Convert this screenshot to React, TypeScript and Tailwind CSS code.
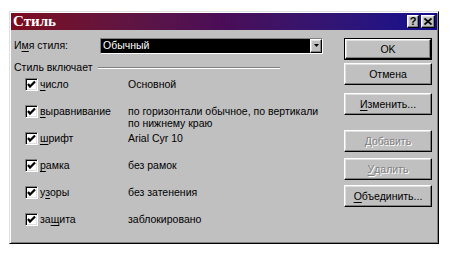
import type { ReactNode } from 'react'

const raised =
  'border border-t-white border-l-white border-r-black border-b-black shadow-[inset_-1px_-1px_#808080,inset_1px_1px_#dfdfdf]'

function Key({ children }: { children: ReactNode }) {
  return <span className="underline underline-offset-[2px] decoration-[1px]">{children}</span>
}

function Button({ children, disabled, primary }: { children: ReactNode; disabled?: boolean; primary?: boolean }) {
  const inner = (
    <div
      className={`flex h-full w-full items-center justify-center bg-[#c0c0c0] ${raised} ${
        disabled ? 'text-[#808080] [text-shadow:1px_1px_#ffffff]' : 'text-black'
      }`}
    >
      {children}
    </div>
  )
  if (primary) {
    return <div className="h-[22px] w-[88px] border border-black">{inner}</div>
  }
  return <div className="h-[22px] w-[88px]">{inner}</div>
}

function CheckBox() {
  return (
    <span className="flex h-[13px] w-[13px] shrink-0 items-center justify-center border border-t-[#808080] border-l-[#808080] border-r-white border-b-white bg-white shadow-[inset_1px_1px_#000,inset_-1px_-1px_#dfdfdf]">
      <svg viewBox="0 0 11 11" className="h-[11px] w-[11px]">
        <path d="M2 5 L4 7.5 L9 2.5" fill="none" stroke="#000" strokeWidth="2.2" />
      </svg>
    </span>
  )
}

const rows: { label: ReactNode; value: ReactNode }[] = [
  { label: <><Key>ч</Key>исло</>, value: 'Основной' },
  {
    label: <><Key>в</Key>ыравнивание</>,
    value: (
      <>
        по горизонтали обычное, по вертикали
        <br />
        по нижнему краю
      </>
    ),
  },
  { label: <><Key>ш</Key>рифт</>, value: 'Arial Cyr 10' },
  { label: <><Key>р</Key>амка</>, value: 'без рамок' },
  { label: <>у<Key>з</Key>оры</>, value: 'без затенения' },
  { label: <>за<Key>щ</Key>ита</>, value: 'заблокировано' },
]

export default function App() {
  return (
    <div className="h-[257px] w-[455px] bg-white pl-[9px] pt-[11px] font-['Liberation_Sans',Arial,sans-serif] text-[10.5px] leading-[13px] text-black">
      <div className="flex h-[233px] w-[430px] flex-col border border-t-[#dfdfdf] border-l-[#dfdfdf] border-r-black border-b-black bg-[#c0c0c0] p-px shadow-[inset_1px_1px_#fff,inset_-1px_-1px_#808080]">
        {/* заголовок */}
        <div className="flex h-[17px] items-center bg-gradient-to-r from-[#7d0a1c] via-[#4a0c58] to-[#120c90] pl-[2px] pr-[2px]">
          <span className="font-['Liberation_Serif',serif] text-[15px] font-bold leading-[17px] text-white">Стиль</span>
          <div className="ml-auto flex gap-[2px]">
            <span className={`flex h-[13px] w-[12px] items-center justify-center bg-[#c0c0c0] text-[11px] font-bold leading-none ${raised}`}>
              ?
            </span>
            <span className={`flex h-[13px] w-[14px] items-center justify-center bg-[#c0c0c0] ${raised}`}>
              <svg viewBox="0 0 8 7" className="h-[7px] w-[8px]">
                <path d="M0.5 0.5 L7.5 6.5 M7.5 0.5 L0.5 6.5" stroke="#000" strokeWidth="1.8" />
              </svg>
            </span>
          </div>
        </div>

        <div className="flex pt-[8px]">
          <div className="flex-1 pl-[3px]">
            <div className="flex h-[15px] items-center">
              <span className="w-[86px]">
                И<Key>м</Key>я стиля:
              </span>
              <div className="flex h-[16px] w-[223px] border border-t-[#808080] border-l-[#808080] border-r-white border-b-white shadow-[inset_1px_1px_#000]">
                <div className="flex flex-1 items-center bg-black pl-[2px] text-white">Обычный</div>
                <div className={`flex w-[12px] items-center justify-center bg-[#c0c0c0] ${raised}`}>
                  <svg viewBox="0 0 5 3" className="h-[3px] w-[5px]">
                    <path d="M0 0 H5 L2.5 3 Z" fill="#000" />
                  </svg>
                </div>
              </div>
            </div>

            <div className="mt-[8px] flex w-[266px] items-center">
              <span>Стиль включает</span>
              <span className="ml-[6px] h-[2px] flex-1 border-t border-b border-t-[#808080] border-b-white" />
            </div>

            <div className="mt-[4px]">
              {rows.map((r, i) => (
                <div key={i} className="flex h-[27px] items-start pl-[11px]">
                  <CheckBox />
                  <span className="ml-[2px] w-[88px]">{r.label}</span>
                  <span className="leading-[12px]">{r.value}</span>
                </div>
              ))}
            </div>
          </div>

          <div className="flex flex-col pr-[5px]">
            <Button primary>OK</Button>
            <div className="mt-[3px]">
              <Button>Отмена</Button>
            </div>
            <div className="mt-[8px]">
              <Button>
                <Key>И</Key>зменить...
              </Button>
            </div>
            <div className="mt-[15px]">
              <Button disabled>
                <Key>Д</Key>обавить
              </Button>
            </div>
            <div className="mt-[6px]">
              <Button disabled>
                <Key>У</Key>далить
              </Button>
            </div>
            <div className="mt-[5px]">
              <Button>
                <Key>О</Key>бъединить...
              </Button>
            </div>
          </div>
        </div>
      </div>
    </div>
  )
}
